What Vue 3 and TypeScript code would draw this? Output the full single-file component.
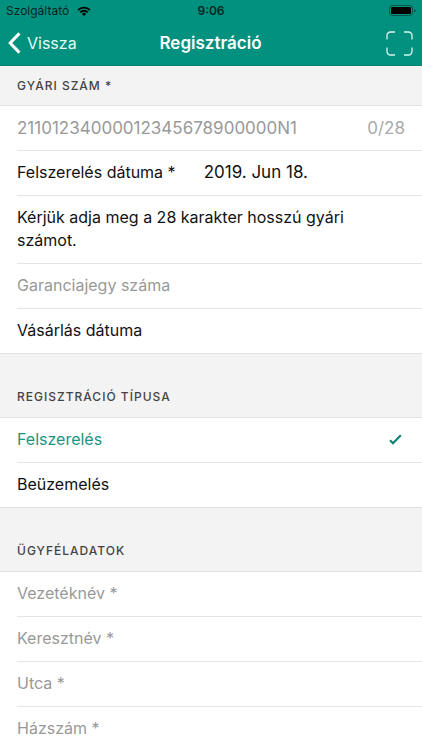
<script setup lang="ts">
import { ref } from 'vue'

interface Field {
  id: string
  label: string
}

const serial = ref<string>('')
const warranty = ref<string>('')
const mountDate = ref<string>('2019. Jun 18.')
const kind = ref<string>('Felszerelés')
const kinds: string[] = ['Felszerelés', 'Beüzemelés']
const customerFields: Field[] = [
  { id: 'last-name', label: 'Vezetéknév *' },
  { id: 'first-name', label: 'Keresztnév *' },
  { id: 'street', label: 'Utca *' },
  { id: 'house-number', label: 'Házszám *' },
]
const customer = ref<Record<string, string>>({})
</script>

<template>
  <div class="screen">
    <header class="top">
      <div class="status">
        <div class="carrier">
          <span>Szolgáltató</span>
          <svg class="wifi" viewBox="0 0 14 10" aria-hidden="true">
            <path d="M0.4 3.4a9.4 9.4 0 0 1 13.2 0L12.3 4.8a7.5 7.5 0 0 0-10.6 0z" />
            <path d="M2.6 5.7a6.2 6.2 0 0 1 8.8 0L10 7.1a4.2 4.2 0 0 0-6 0z" />
            <path d="M4.9 7.9a3 3 0 0 1 4.2 0L7 10z" />
          </svg>
        </div>
        <span class="time">9:06</span>
        <svg class="battery" viewBox="0 0 27 12" aria-hidden="true">
          <rect x="0.5" y="0.5" width="23" height="10" rx="2.5" fill="none" stroke="#04594d" />
          <rect x="2" y="2" width="20" height="7" rx="1" />
          <path d="M25 4a1.6 1.6 0 0 1 0 3.4z" fill="#04594d" />
        </svg>
      </div>
      <nav class="bar">
        <button type="button" class="back">
          <svg class="chevron" viewBox="0 0 13 22" aria-hidden="true">
            <path d="M11.4 1.4L2.2 11l9.2 9.6" fill="none" stroke="#fff" stroke-width="3" />
          </svg>
          <span>Vissza</span>
        </button>
        <h1>Regisztráció</h1>
        <button type="button" class="scan" aria-label="Kód beolvasása">
          <svg viewBox="0 0 27 25" aria-hidden="true">
            <path
              d="M1 8.500V4.500a3.500 3.500 0 0 1 3.500-3.500H9M18 1h4.500A3.500 3.500 0 0 1 26 4.500v4M26 16.500v4a3.500 3.500 0 0 1-3.500 3.500H18M9 24H4.500A3.500 3.500 0 0 1 1 20.500v-4"
              fill="none" stroke="#d9f5f0" stroke-width="1.300"
            />
          </svg>
        </button>
      </nav>
    </header>

    <main>
      <section>
        <h2 class="first"><label for="serial">Gyári szám *</label></h2>
        <div class="rows">
          <div class="row numeric">
            <input id="serial" v-model="serial" type="text" maxlength="28" placeholder="21101234000012345678900000N1" />
            <span class="count">{{ serial.length }}/28</span>
          </div>
          <button type="button" class="row date">
            <span>Felszerelés dátuma *</span>
            <span class="numeric">{{ mountDate }}</span>
          </button>
          <p class="row message">Kérjük adja meg a 28 karakter hosszú gyári számot.</p>
          <div class="row">
            <input v-model="warranty" type="text" placeholder="Garanciajegy száma" aria-label="Garanciajegy száma" />
          </div>
          <button type="button" class="row date">
            <span>Vásárlás dátuma</span>
          </button>
        </div>
      </section>

      <section role="radiogroup" aria-labelledby="kind-title">
        <h2 id="kind-title">Regisztráció típusa</h2>
        <div class="rows">
          <label v-for="k in kinds" :key="k" class="row choice" :class="{ chosen: kind === k }">
            <span>{{ k }}</span>
            <input v-model="kind" type="radio" name="kind" :value="k" />
            <svg v-if="kind === k" class="check" viewBox="0 0 13 11" aria-hidden="true">
              <path d="M1 6.200l3 3L11.800 1.300" fill="none" stroke="#0b8574" stroke-width="2.200" />
            </svg>
          </label>
        </div>
      </section>

      <section>
        <h2>Ügyféladatok</h2>
        <div class="rows">
          <div v-for="f in customerFields" :key="f.id" class="row">
            <input :id="f.id" v-model="customer[f.id]" type="text" :placeholder="f.label" :aria-label="f.label" />
          </div>
        </div>
      </section>
    </main>
  </div>
</template>

<style>
body {
  background: #fff;
}
</style>

<style scoped>
.screen {
  font-family: Inter, Roboto, "Liberation Sans", sans-serif;
  font-size: 16px;
  line-height: 23px;
  color: #111;
}

button,
input {
  font: inherit;
  color: inherit;
  background: none;
  border: 0;
  padding: 0;
  margin: 0;
  text-align: left;
}

.top {
  background: #02917e;
  border-bottom: 1px solid #02806f;
}

.status {
  display: grid;
  grid-template-columns: 1fr auto 1fr;
  align-items: center;
  height: 21px;
  padding: 0 6px;
  font-size: 12px;
  line-height: 21px;
  color: #06251f;
}

.carrier {
  display: flex;
  align-items: center;
  gap: 8px;
}

.wifi {
  width: 14px;
  height: 10px;
  fill: #000;
}

.time {
  font-weight: 600;
}

.battery {
  justify-self: end;
  width: 27px;
  height: 12px;
}

.bar {
  display: grid;
  grid-template-columns: 1fr auto 1fr;
  align-items: center;
  height: 44px;
  padding: 0 9px 0 8px;
  color: #fff;
}

.back {
  display: flex;
  align-items: center;
  gap: 6px;
  color: #e6faf7;
}

.chevron {
  width: 13px;
  height: 22px;
}

h1 {
  margin: 0;
  font-size: 17px;
  font-weight: 600;
}

.scan {
  justify-self: end;
  display: flex;
}

.scan svg {
  width: 27px;
  height: 25px;
}

h2 {
  margin: 0;
  padding: 31px 17px 9px;
  font-size: 12px;
  line-height: 23px;
  font-weight: 500;
  letter-spacing: 1px;
  text-transform: uppercase;
  color: #444;
  background: #f3f3f3;
}

h2.first {
  padding-top: 8px;
  padding-bottom: 8px;
}

.rows {
  padding-left: 17px;
  border-top: 1px solid #e2e2e3;
  border-bottom: 1px solid #e2e2e3;
}

section:last-child .rows {
  border-bottom: 0;
}

.row {
  display: flex;
  align-items: center;
  box-sizing: border-box;
  width: 100%;
  min-height: 45px;
  margin: 0;
  padding: 0 17px 1px 0;
  border-bottom: 1px solid #e6e6e7;
}

.row:last-child {
  min-height: 44px;
  border-bottom: 0;
}

.row input[type="text"] {
  flex: 1;
  min-width: 0;
  outline: none;
}

.row input::placeholder {
  color: #999;
  opacity: 1;
}

.numeric {
  font-size: 17px;
}

.row.numeric {
  padding-bottom: 0;
}

.count {
  color: #aaa;
}

.date {
  align-items: baseline;
  padding-top: 10px;
  gap: 28px;
}

.message {
  padding: 10px 17px 11px 0;
}

.choice {
  justify-content: space-between;
}

.choice input {
  appearance: none;
  width: 0;
  height: 0;
}

.chosen {
  color: #1a9482;
}

.check {
  width: 13px;
  height: 11px;
  margin-right: 3px;
}
</style>
